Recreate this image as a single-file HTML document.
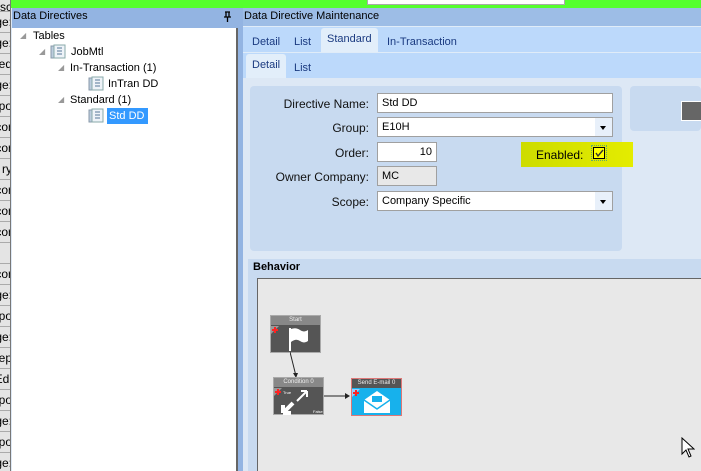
<!DOCTYPE html>
<html><head><style>
*{margin:0;padding:0;box-sizing:border-box}
body{width:701px;height:471px;overflow:hidden;position:relative;background:#dde8f5;font-family:"Liberation Sans",sans-serif;font-size:11px;color:#000}
.a{position:absolute}
.strip{left:0;top:0;width:11px;height:471px;background:#e4e4e4;border-right:1px solid #777;overflow:hidden}
.row{position:absolute;left:0;width:11px;height:21px;border-bottom:1px solid #aaa;overflow:hidden}
.row span{position:absolute;right:-1px;top:3px;font-size:12px;white-space:nowrap}
.lbl{position:absolute;width:120px;text-align:right;font-size:12px;color:#111}
.inp{position:absolute;background:#fff;border:1px solid #a0a0a0;font-size:11px;padding:3px 4px;height:20px}
.dd{position:absolute;right:0;top:0;width:17px;height:18px;background:#e8f0fa}
.dd:after{content:"";position:absolute;left:5px;top:8px;border-left:3px solid transparent;border-right:3px solid transparent;border-top:4px solid #000}
.tab{position:absolute;font-size:11px;color:#1a3a80}
</style></head><body>
<div class="a" style="left:11px;top:0;width:690px;height:8px;background:#55ff2e"></div>
<div class="a" style="left:367px;top:0;width:198px;height:5px;background:#fff;border:1px solid #aaa;border-top:0"></div>
<div class="a strip">
<div class="row" style="top:0;height:12px"><span style="top:0">sc</span></div>
<div class="row" style="top:12px"><span>ge:</span></div>
<div class="row" style="top:33px"><span>ge:</span></div>
<div class="row" style="top:54px"><span>ed</span></div>
<div class="row" style="top:75px"><span>ge:</span></div>
<div class="row" style="top:96px"><span>cpo</span></div>
<div class="row" style="top:117px"><span>cor</span></div>
<div class="row" style="top:138px"><span>cor</span></div>
<div class="row" style="top:159px"><span>ry</span></div>
<div class="row" style="top:180px"><span>cor</span></div>
<div class="row" style="top:201px"><span>cor</span></div>
<div class="row" style="top:222px"><span>cor</span></div>
<div class="row" style="top:243px"><span></span></div>
<div class="row" style="top:264px"><span>cor</span></div>
<div class="row" style="top:285px"><span>ge:</span></div>
<div class="row" style="top:306px"><span>cpo</span></div>
<div class="row" style="top:327px"><span>ge:</span></div>
<div class="row" style="top:348px"><span>ep</span></div>
<div class="row" style="top:369px"><span>Edi</span></div>
<div class="row" style="top:390px"><span>cpo</span></div>
<div class="row" style="top:411px"><span>ge:</span></div>
<div class="row" style="top:432px"><span>cpo</span></div>
<div class="row" style="top:453px"><span>ge:</span></div>
</div>
<!-- left panel -->
<div class="a" style="left:12px;top:8px;width:231px;height:20px;background:#93b4e2"></div>
<div class="a" style="left:13px;top:10px;font-size:11px">Data Directives</div>
<svg class="a" style="left:223px;top:11px" width="9" height="11"><path d="M2 1h5M3 1v5M6 1v5M1 6h7M4.5 6v5" stroke="#000" stroke-width="1.3" fill="none"/></svg>
<div class="a" style="left:12px;top:28px;width:226px;height:443px;background:#fff;border-right:2px solid #666"></div>
<div class="a" style="left:238px;top:28px;width:5px;height:443px;background:#93b4e2"></div>
<div class="a" style="left:20px;top:31px;font-size:8px;color:#999">&#9698;</div>
<div class="a" style="left:33px;top:30px;font-size:11px">Tables</div>
<div class="a" style="left:39px;top:47px;font-size:8px;color:#999">&#9698;</div>
<svg class="a" style="left:50px;top:44px" width="16" height="16"><rect x="1" y="2" width="4" height="12" fill="#bcd" stroke="#89a"/><rect x="4" y="1" width="11" height="13" fill="#eef3f8" stroke="#8aa"/><path d="M7 4h5M7 7h5M7 10h5" stroke="#579"/></svg>
<div class="a" style="left:71px;top:46px;font-size:11px">JobMtl</div>
<div class="a" style="left:58px;top:63px;font-size:8px;color:#999">&#9698;</div>
<div class="a" style="left:70px;top:62px;font-size:11px">In-Transaction (1)</div>
<svg class="a" style="left:88px;top:76px" width="16" height="16"><rect x="1" y="2" width="4" height="12" fill="#bcd" stroke="#89a"/><rect x="4" y="1" width="11" height="13" fill="#eef3f8" stroke="#8aa"/><path d="M7 4h5M7 7h5M7 10h5" stroke="#579"/></svg>
<div class="a" style="left:108px;top:78px;font-size:11px">InTran DD</div>
<div class="a" style="left:58px;top:95px;font-size:8px;color:#999">&#9698;</div>
<div class="a" style="left:70px;top:94px;font-size:11px">Standard (1)</div>
<svg class="a" style="left:88px;top:108px" width="16" height="16"><rect x="1" y="2" width="4" height="12" fill="#bcd" stroke="#89a"/><rect x="4" y="1" width="11" height="13" fill="#eef3f8" stroke="#8aa"/><path d="M7 4h5M7 7h5M7 10h5" stroke="#579"/></svg>
<div class="a" style="left:107px;top:108px;width:41px;height:16px;background:#3399ff;color:#fff;font-size:11px;padding:2px 2px">Std DD</div>
<!-- right -->
<div class="a" style="left:243px;top:8px;width:458px;height:18px;background:#9dbde6"></div>
<div class="a" style="left:244px;top:10px;font-size:11px">Data Directive Maintenance</div>
<div class="a" style="left:243px;top:26px;width:458px;height:26px;background:#bcd9fb;border-top:1px solid #e0ecf8"></div>
<div class="a" style="left:321px;top:28px;width:57px;height:24px;background:#e2eefa;border-radius:3px 3px 0 0"></div>
<div class="tab" style="left:252px;top:36px">Detail</div>
<div class="tab" style="left:294px;top:36px">List</div>
<div class="tab" style="left:327px;top:33px">Standard</div>
<div class="tab" style="left:387px;top:36px">In-Transaction</div>
<div class="a" style="left:243px;top:52px;width:458px;height:26px;background:#bcd9fb;border-top:1px solid #e0ecf8"></div>
<div class="a" style="left:246px;top:54px;width:40px;height:24px;background:#e2eefa;border-radius:3px 3px 0 0"></div>
<div class="tab" style="left:252px;top:59px">Detail</div>
<div class="tab" style="left:294px;top:62px">List</div>
<div class="a" style="left:243px;top:78px;width:458px;height:393px;background:#dde8f5"></div>
<div class="a" style="left:250px;top:86px;width:372px;height:165px;background:#c8daf0;border-radius:4px"></div>
<div class="a" style="left:630px;top:86px;width:71px;height:45px;background:#c8daf0;border-radius:4px"></div>
<div class="a" style="left:681px;top:101px;width:20px;height:20px;background:#666;border-left:1px solid #fff;border-top:1px solid #fff;border-bottom:1px solid #fff"></div>
<div class="lbl" style="left:249px;top:97px">Directive Name:</div>
<div class="inp" style="left:377px;top:93px;width:236px">Std DD</div>
<div class="lbl" style="left:249px;top:121px">Group:</div>
<div class="inp" style="left:377px;top:117px;width:236px">E10H<div class="dd"></div></div>
<div class="lbl" style="left:249px;top:146px">Order:</div>
<div class="inp" style="left:377px;top:142px;width:60px;text-align:right">10</div>
<div class="lbl" style="left:249px;top:170px">Owner Company:</div>
<div class="inp" style="left:377px;top:166px;width:60px;background:#e8e8e8">MC</div>
<div class="lbl" style="left:249px;top:195px">Scope:</div>
<div class="inp" style="left:377px;top:191px;width:236px">Company Specific<div class="dd"></div></div>
<div class="a" style="left:521px;top:142px;width:112px;height:25px;background:linear-gradient(90deg,#cddc00,#e4ec00)"></div>
<div class="a" style="left:536px;top:148px;font-size:12px">Enabled:</div>
<div class="a" style="left:593px;top:147px;width:12px;height:12px;background:#ffff00;border:1px solid #000;outline:1px dotted #6a6;outline-offset:1px"></div>
<svg class="a" style="left:594px;top:148px" width="11" height="11"><path d="M2 5l2 3 5-6" stroke="#333" stroke-width="1.4" fill="none"/></svg>
<!-- behavior -->
<div class="a" style="left:248px;top:259px;width:453px;height:212px;background:#c8daf0"></div>
<div class="a" style="left:253px;top:261px;font-size:11px;font-weight:bold">Behavior</div>
<div class="a" style="left:257px;top:278px;width:444px;height:193px;background:#e8e8e8;border-left:1px solid #666;border-top:1px solid #666"></div>
<!-- nodes -->
<div class="a" style="left:270px;top:315px;width:51px;height:38px;background:#555;border:1px solid #aaa"></div>
<div class="a" style="left:271px;top:316px;width:49px;height:9px;background:#888;color:#eee;font-size:6px;text-align:center;line-height:9px">Start</div>
<svg class="a" style="left:270px;top:325px" width="51" height="28"><path d="M1 1h8l-8 8z" fill="#999"/><path d="M2 5h6M5 2v6" stroke="#f22" stroke-width="2"/><rect x="19" y="3" width="2" height="23" fill="#fff"/><path d="M21 4q5 -2 9 1t8 0v11q-4 3 -8 0t-9 1z" fill="#fff"/></svg>
<svg class="a" style="left:290px;top:352px" width="60" height="50"><path d="M0 0l6 24" stroke="#222"/><path d="M3 21l3 5 2-5z" fill="#222"/><path d="M34 44h25" stroke="#222"/><path d="M55 41l5 3-5 3z" fill="#222"/></svg>
<div class="a" style="left:273px;top:377px;width:51px;height:38px;background:#555;border:1px solid #aaa"></div>
<div class="a" style="left:274px;top:378px;width:49px;height:9px;background:#888;color:#eee;font-size:6px;text-align:center;line-height:9px">Condition 0</div>
<svg class="a" style="left:273px;top:387px" width="51" height="28"><path d="M1 1h8l-8 8z" fill="#999"/><path d="M2 5h6M5 2v6" stroke="#f22" stroke-width="2"/><path d="M10 26l10-10M10 26v-8M10 26h8" stroke="#fff" stroke-width="4" fill="none"/><path d="M24 14l10-10M34 4v6M34 4h-6" stroke="#fff" stroke-width="2" fill="none"/><text x="10" y="7" font-size="4" fill="#fff">True</text><text x="40" y="26" font-size="4" fill="#fff">False</text></svg>
<div class="a" style="left:351px;top:378px;width:51px;height:38px;background:#17b1ec;border:1px solid #d77"></div>
<div class="a" style="left:352px;top:379px;width:49px;height:9px;background:#555;color:#eee;font-size:6px;text-align:center;line-height:9px">Send E-mail 0</div>
<svg class="a" style="left:351px;top:388px" width="51" height="28"><path d="M1 1h8l-8 8z" fill="#9cf"/><path d="M2 5h6M5 2v6" stroke="#f22" stroke-width="2"/><path d="M13 12l13-9 13 9v13h-26z" fill="#fff"/><path d="M13 12l13 9 13-9" stroke="#17b1ec" stroke-width="1.5" fill="none"/><rect x="21" y="8" width="10" height="6" fill="#17b1ec"/></svg>
<svg class="a" style="left:681px;top:437px" width="14" height="22"><path d="M1 1v16l4-4 3 7 2-1-3-7h6z" fill="#fff" stroke="#000"/></svg>
</body></html>
